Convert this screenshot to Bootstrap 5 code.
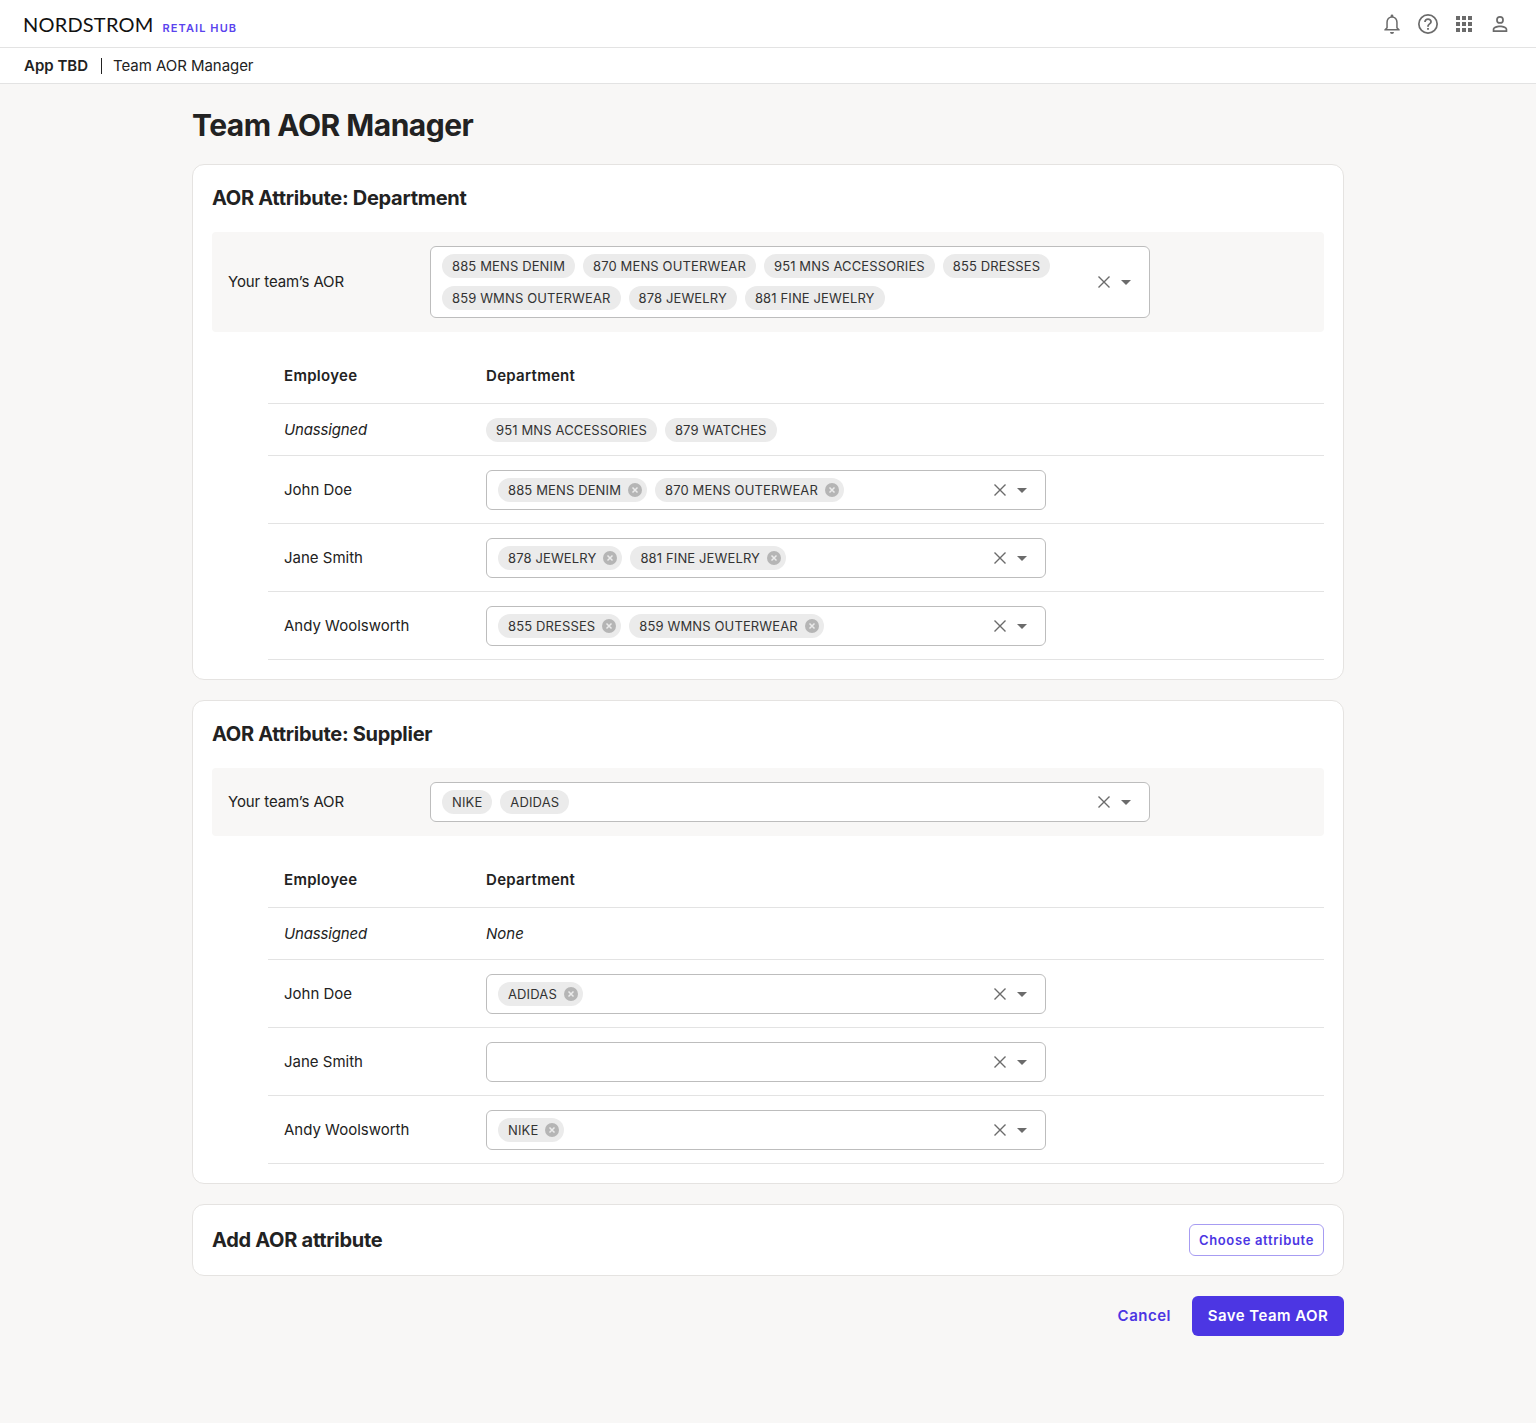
<!DOCTYPE html>
<html lang="en">
<head>
  <meta charset="UTF-8" />
  <meta name="viewport" content="width=device-width, initial-scale=1" />
  <title>Team AOR Manager</title>

  <link href="https://cdn.jsdelivr.net/npm/bootstrap@5.3.3/dist/css/bootstrap.min.css" rel="stylesheet" />

  <style>
    body {
      background-color: #f8f7f6;
      font-family: Inter, "Liberation Sans", sans-serif;
      font-size: 15px;
      color: #222;
      min-height: 1423px;
    }

    .hub-top {
      height: 48px;
      background: #fff;
      border-bottom: 1px solid #e3e3e3;
      padding: 0 24px;
    }

    .hub-logo {
      font-family: Lato, sans-serif;
      font-size: 20px;
      font-weight: 400;
      letter-spacing: 0.2px;
      color: #111;
      line-height: 1;
      margin-left: -1px;
    }

    .hub-tag {
      font-size: 11px;
      font-weight: 600;
      letter-spacing: 1.1px;
      color: #5a43ee;
      margin-left: 9px;
      position: relative;
      top: 5px;
    }

    .hub-icons { gap: 12px; }
    .hub-icons svg { width: 24px; height: 24px; display: block; fill: #6b6b6b; }

    .hub-crumbs {
      height: 36px;
      background: #fff;
      border-bottom: 1px solid #e3e3e3;
      padding: 1px 24px 0;
    }

    .crumb-app { font-weight: 600; }
    .crumb-sep { width: 1px; height: 16px; background: #222; margin: 0 11px 0 13px; }
    .crumb-page { letter-spacing: -0.05px; }

    .page-wrap { width: 1152px; margin: 0 auto; }

    .page-title {
      font-size: 30px;
      font-weight: 700;
      letter-spacing: -0.5px;
      line-height: 36px;
      margin: 23px 0 21px;
      color: #222;
    }

    .aor-card {
      background: #fff;
      border: 1px solid #e5e3e1;
      border-radius: 12px;
      padding: 19px;
      margin-bottom: 20px;
    }

    .aor-title {
      font-size: 20px;
      font-weight: 700;
      letter-spacing: -0.28px;
      line-height: 28px;
      margin: 0 0 20px;
    }

    .aor-panel {
      background: #f8f7f6;
      border-radius: 4px;
      padding: 14px 16px;
    }

    .panel-label { width: 202px; flex: none; letter-spacing: -0.1px; }

    .tag-select {
      background: #fff;
      border: 1px solid #bdbdbd;
      border-radius: 6px;
      padding: 7px 11px;
      min-height: 40px;
    }

    .tag-select.wide { width: 720px; }
    .tag-select.slim { width: 560px; }

    .tag-list { gap: 8px; flex: 1 1 auto; min-width: 0; max-width: 640px; }

    .tag-chip {
      display: inline-flex;
      align-items: center;
      height: 24px;
      padding: 0 10px;
      border-radius: 12px;
      background: #ebebeb;
      font-size: 13px;
      line-height: 24px;
      letter-spacing: 0.13px;
      color: #333;
      white-space: nowrap;
    }

    .tag-x { width: 14px; height: 14px; margin-left: 7px; margin-right: -5px; flex: none; }

    .select-tools { flex: none; gap: 7px; margin-right: 7px; }
    .select-clear { width: 16px; height: 16px; display: block; }
    .select-caret { width: 0; height: 0; border-left: 5px solid transparent; border-right: 5px solid transparent; border-top: 5px solid #6b6b6b; margin-left: 2px; }

    .aor-table {
      width: 1056px;
      margin: 16px 0 0 56px;
      --bs-table-bg: transparent;
      --bs-table-color: #222;
      --bs-table-border-color: #e3e3e3;
      font-size: 15px;
    }

    .aor-table th, .aor-table td {
      padding: 14px 16px 13px;
      vertical-align: middle;
      line-height: 24px;
    }

    .aor-table th { font-weight: 600; letter-spacing: 0.3px; padding-top: 16px; padding-bottom: 15px; }
    .aor-table .first-col { width: 202px; }
    .aor-table td.first-col { letter-spacing: -0.15px; }

    .aor-add { padding-top: 19px; padding-bottom: 19px; }
    .aor-add .aor-title { margin: 0; }

    .btn-choose {
      height: 32px;
      padding: 0 9px;
      font-size: 13px;
      font-weight: 600;
      letter-spacing: 0.65px;
      line-height: 30px;
      color: #4c36e3;
      background: #fff;
      border: 1px solid #a79cf2;
      border-radius: 6px;
    }

    .btn-cancel {
      color: #4c36e3;
      font-size: 15px;
      font-weight: 600;
      letter-spacing: 0.5px;
      padding: 0;
      border: 0;
      margin-right: 21px;
    }

    .btn-save {
      height: 40px;
      width: 152px;
      padding: 0;
      background: #4c36e3;
      border: 0;
      border-radius: 6px;
      color: #fff;
      font-size: 15px;
      font-weight: 600;
      letter-spacing: 0.45px;
    }
  </style>
</head>
<body>

  <svg width="0" height="0" class="position-absolute">
    <symbol id="ico-x" viewBox="0 0 14 14">
      <circle cx="7" cy="7" r="7" fill="#b5b5b5" />
      <path d="M4.5 4.5l5 5M9.5 4.500l-5 5" stroke="#ebebeb" stroke-width="1.5" fill="none" />
    </symbol>
    <symbol id="ico-clear" viewBox="0 0 16 16">
      <path d="M2.5 2.5l11 11M13.5 2.5l-11 11" stroke="#6b6b6b" stroke-width="1.4" fill="none" />
    </symbol>
  </svg>

  <header class="hub-top d-flex align-items-center justify-content-between">
    <div class="d-flex align-items-center">
      <span class="hub-logo">NORDSTROM</span>
      <span class="hub-tag">RETAIL HUB</span>
    </div>
    <div class="hub-icons d-flex align-items-center">
      <svg viewBox="0 0 24 24"><path d="M12 2.500a1.400 1.400 0 0 1 1.400 1.400v.5c2.700.7 4.300 3 4.300 5.800v5.300l2 2v1H4.300v-1l2-2v-5.300c0-2.800 1.600-5.100 4.300-5.800v-.5A1.400 1.400 0 0 1 12 2.500zm0 3.300c-2.600 0-4.200 2-4.200 4.400v5.900l-.8.9h10l-.8-.9v-5.900c0-2.400-1.600-4.400-4.200-4.400zM10 20h4a2 2 0 0 1-4 0z" /></svg>
      <svg viewBox="0 0 24 24"><path fill-rule="evenodd" d="M12 2a10 10 0 1 1 0 20 10 10 0 0 1 0-20zm0 1.700a8.300 8.300 0 1 0 0 16.600 8.300 8.300 0 0 0 0-16.600z" /><path d="M11.100 16h1.800v1.800h-1.800zM12 6.200c2.200 0 3.900 1.500 3.900 3.500 0 2.500-3 2.700-3 5h-1.800c0-3 3-3.200 3-5 0-1-.9-1.800-2.100-1.800S9.900 8.700 9.900 9.900H8.100c0-2.100 1.700-3.700 3.900-3.700z" /></svg>
      <svg viewBox="0 0 24 24"><path d="M4 4h4v4H4zM10 4h4v4h-4zM16 4h4v4h-4zM4 10h4v4H4zM10 10h4v4h-4zM16 10h4v4h-4zM4 16h4v4H4zM10 16h4v4h-4zM16 16h4v4h-4z" /></svg>
      <svg viewBox="0 0 24 24"><path fill-rule="evenodd" d="M12 4a3.900 3.900 0 1 1 0 7.800A3.900 3.900 0 0 1 12 4zm0 1.700a2.200 2.200 0 1 0 0 4.400 2.200 2.200 0 0 0 0-4.400zM12 13.500c3.600 0 7.300 1.500 7.300 3.800V20H4.700v-2.700c0-2.300 3.700-3.800 7.300-3.800zm0 1.700c-3 0-5.600 1.100-5.600 2.100v1h11.200v-1c0-1-2.600-2.100-5.600-2.100z" /></svg>
    </div>
  </header>

  <div class="hub-crumbs d-flex align-items-center">
    <span class="crumb-app">App TBD</span>
    <span class="crumb-sep"></span>
    <span class="crumb-page">Team AOR Manager</span>
  </div>

  <main class="page-wrap">
    <h1 class="page-title">Team AOR Manager</h1>

    <section class="aor-card">
      <h2 class="aor-title">AOR Attribute: Department</h2>
      <div class="aor-panel d-flex align-items-center">
        <div class="panel-label">Your team’s AOR</div>
        <div class="tag-select wide d-flex align-items-center">
          <div class="tag-list d-flex flex-wrap">
            <span class="tag-chip">885 MENS DENIM</span>
            <span class="tag-chip">870 MENS OUTERWEAR</span>
            <span class="tag-chip">951 MNS ACCESSORIES</span>
            <span class="tag-chip">855 DRESSES</span>
            <span class="tag-chip">859 WMNS OUTERWEAR</span>
            <span class="tag-chip">878 JEWELRY</span>
            <span class="tag-chip">881 FINE JEWELRY</span>
          </div>
          <div class="select-tools d-flex align-items-center ms-auto">
            <svg class="select-clear"><use href="#ico-clear" /></svg>
            <span class="select-caret"></span>
          </div>
        </div>
      </div>

      <table class="table aor-table mb-0">
        <thead>
          <tr><th class="first-col">Employee</th><th>Department</th></tr>
        </thead>
        <tbody>
          <tr>
            <td class="first-col fst-italic">Unassigned</td>
            <td><div class="d-flex gap-2"><span class="tag-chip">951 MNS ACCESSORIES</span><span class="tag-chip">879 WATCHES</span></div></td>
          </tr>
          <tr>
            <td>John Doe</td>
            <td>
              <div class="tag-select slim d-flex align-items-center">
                <div class="tag-list d-flex flex-wrap">
                  <span class="tag-chip">885 MENS DENIM<svg class="tag-x"><use href="#ico-x" /></svg></span>
                  <span class="tag-chip">870 MENS OUTERWEAR<svg class="tag-x"><use href="#ico-x" /></svg></span>
                </div>
                <div class="select-tools d-flex align-items-center ms-auto">
                  <svg class="select-clear"><use href="#ico-clear" /></svg>
                  <span class="select-caret"></span>
                </div>
              </div>
            </td>
          </tr>
          <tr>
            <td>Jane Smith</td>
            <td>
              <div class="tag-select slim d-flex align-items-center">
                <div class="tag-list d-flex flex-wrap">
                  <span class="tag-chip">878 JEWELRY<svg class="tag-x"><use href="#ico-x" /></svg></span>
                  <span class="tag-chip">881 FINE JEWELRY<svg class="tag-x"><use href="#ico-x" /></svg></span>
                </div>
                <div class="select-tools d-flex align-items-center ms-auto">
                  <svg class="select-clear"><use href="#ico-clear" /></svg>
                  <span class="select-caret"></span>
                </div>
              </div>
            </td>
          </tr>
          <tr>
            <td>Andy Woolsworth</td>
            <td>
              <div class="tag-select slim d-flex align-items-center">
                <div class="tag-list d-flex flex-wrap">
                  <span class="tag-chip">855 DRESSES<svg class="tag-x"><use href="#ico-x" /></svg></span>
                  <span class="tag-chip">859 WMNS OUTERWEAR<svg class="tag-x"><use href="#ico-x" /></svg></span>
                </div>
                <div class="select-tools d-flex align-items-center ms-auto">
                  <svg class="select-clear"><use href="#ico-clear" /></svg>
                  <span class="select-caret"></span>
                </div>
              </div>
            </td>
          </tr>
        </tbody>
      </table>
    </section>

    <section class="aor-card">
      <h2 class="aor-title">AOR Attribute: Supplier</h2>
      <div class="aor-panel d-flex align-items-center">
        <div class="panel-label">Your team’s AOR</div>
        <div class="tag-select wide d-flex align-items-center">
          <div class="tag-list d-flex flex-wrap">
            <span class="tag-chip">NIKE</span>
            <span class="tag-chip">ADIDAS</span>
          </div>
          <div class="select-tools d-flex align-items-center ms-auto">
            <svg class="select-clear"><use href="#ico-clear" /></svg>
            <span class="select-caret"></span>
          </div>
        </div>
      </div>

      <table class="table aor-table mb-0">
        <thead>
          <tr><th class="first-col">Employee</th><th>Department</th></tr>
        </thead>
        <tbody>
          <tr>
            <td class="first-col fst-italic">Unassigned</td>
            <td class="fst-italic">None</td>
          </tr>
          <tr>
            <td>John Doe</td>
            <td>
              <div class="tag-select slim d-flex align-items-center">
                <div class="tag-list d-flex flex-wrap">
                  <span class="tag-chip">ADIDAS<svg class="tag-x"><use href="#ico-x" /></svg></span>
                </div>
                <div class="select-tools d-flex align-items-center ms-auto">
                  <svg class="select-clear"><use href="#ico-clear" /></svg>
                  <span class="select-caret"></span>
                </div>
              </div>
            </td>
          </tr>
          <tr>
            <td>Jane Smith</td>
            <td>
              <div class="tag-select slim d-flex align-items-center">
                <div class="select-tools d-flex align-items-center ms-auto">
                  <svg class="select-clear"><use href="#ico-clear" /></svg>
                  <span class="select-caret"></span>
                </div>
              </div>
            </td>
          </tr>
          <tr>
            <td>Andy Woolsworth</td>
            <td>
              <div class="tag-select slim d-flex align-items-center">
                <div class="tag-list d-flex flex-wrap">
                  <span class="tag-chip">NIKE<svg class="tag-x"><use href="#ico-x" /></svg></span>
                </div>
                <div class="select-tools d-flex align-items-center ms-auto">
                  <svg class="select-clear"><use href="#ico-clear" /></svg>
                  <span class="select-caret"></span>
                </div>
              </div>
            </td>
          </tr>
        </tbody>
      </table>
    </section>

    <section class="aor-card aor-add d-flex align-items-center justify-content-between">
      <h2 class="aor-title">Add AOR attribute</h2>
      <button type="button" class="btn btn-choose">Choose attribute</button>
    </section>

    <div class="d-flex align-items-center justify-content-end">
      <button type="button" class="btn btn-cancel">Cancel</button>
      <button type="button" class="btn btn-save">Save Team AOR</button>
    </div>
  </main>

  <script src="https://cdn.jsdelivr.net/npm/bootstrap@5.3.3/dist/js/bootstrap.bundle.min.js"></script>
</body>
</html>
